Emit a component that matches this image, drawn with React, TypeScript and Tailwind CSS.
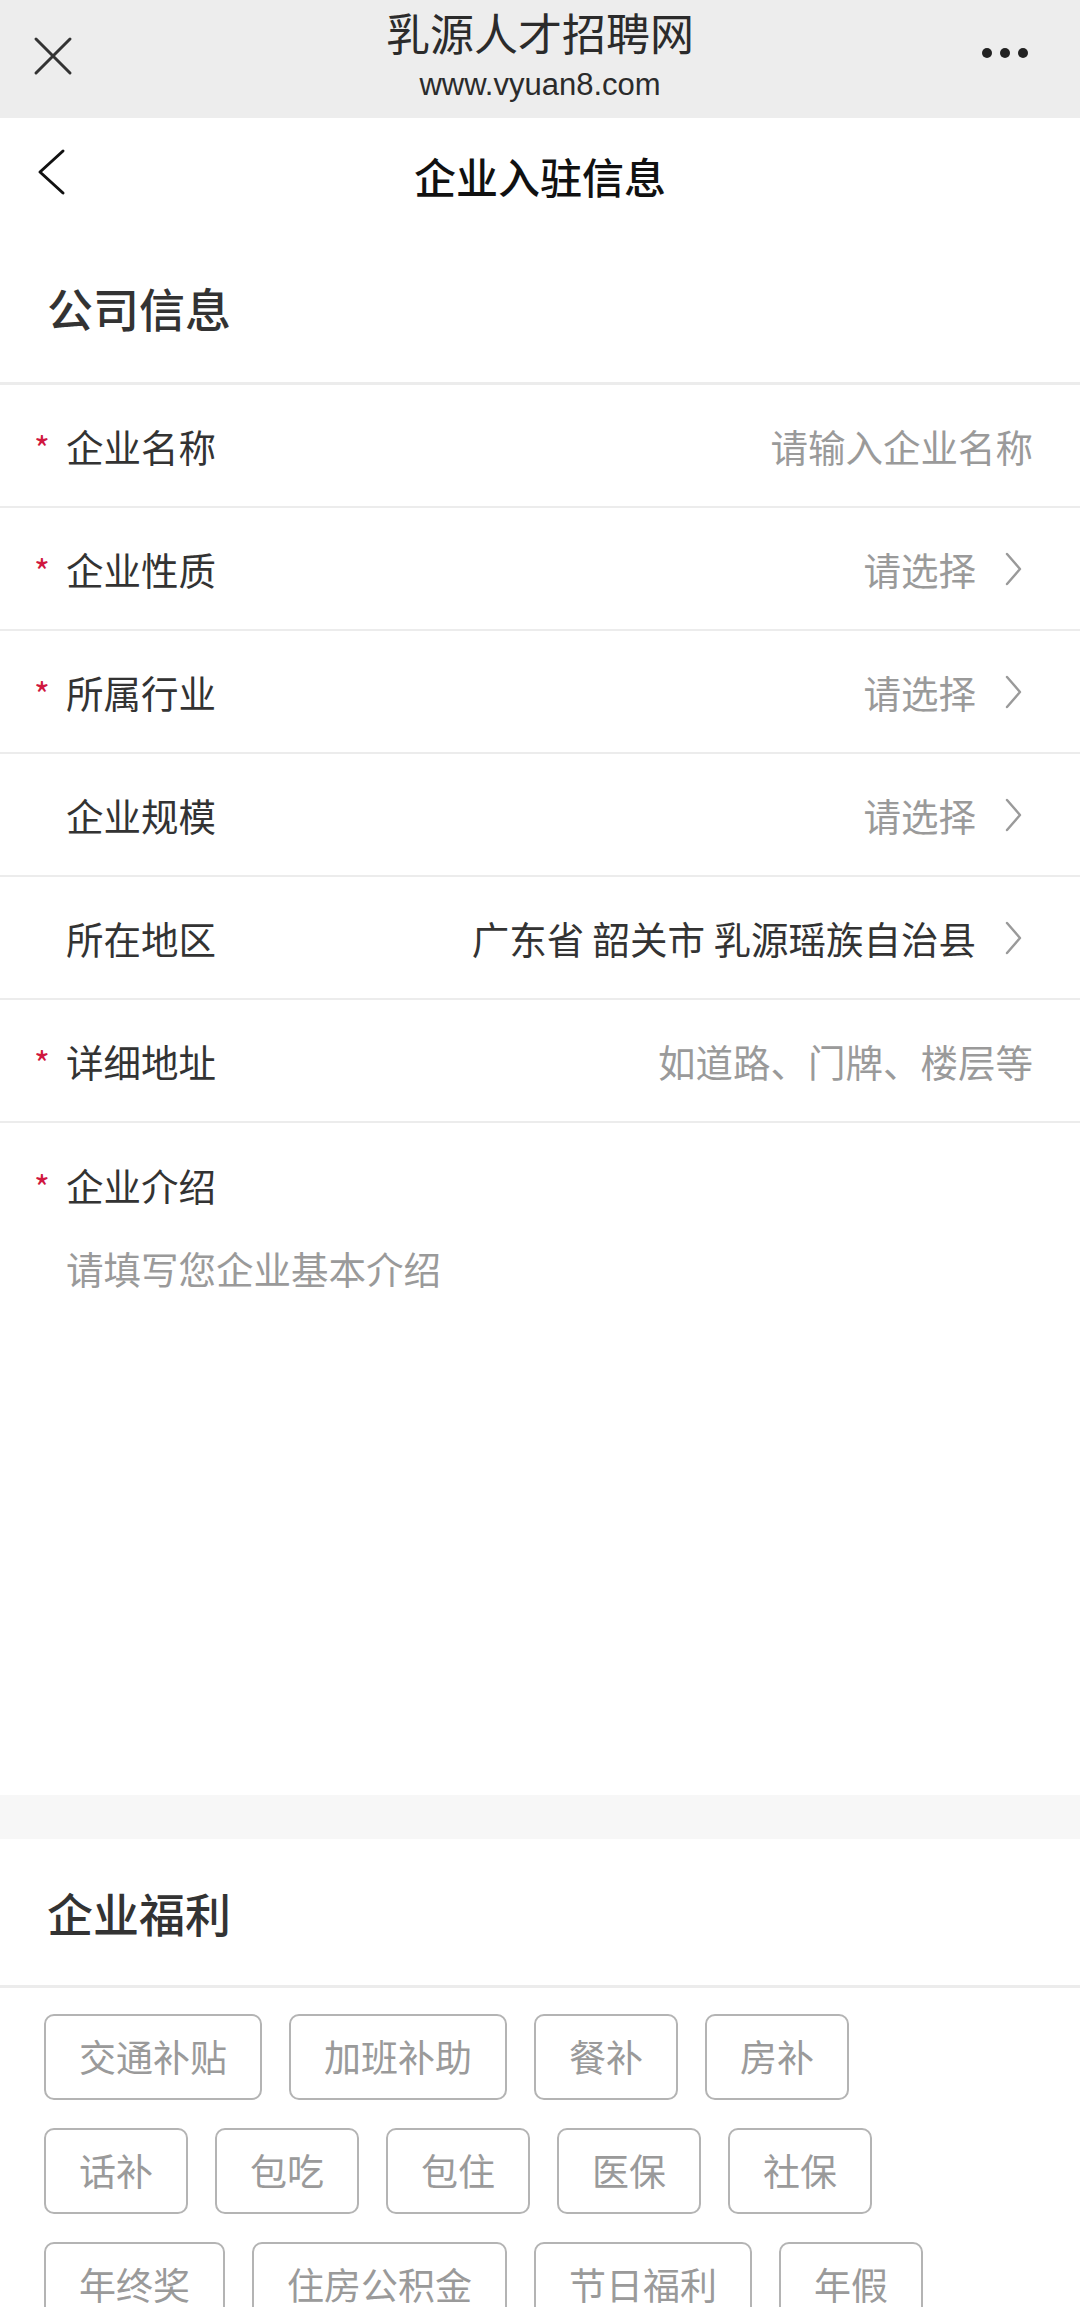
import React from "react";

const CJK = { fontFamily: '"Noto Sans CJK SC", "Noto Sans", sans-serif' };

function Chevron() {
  return (
    <svg width="20" height="36" viewBox="0 0 20 36" fill="none" className="ml-[28px] mr-[9px] shrink-0">
      <path d="M3 3 L16 18 L3 33" stroke="#9a9a9a" strokeWidth="2.4" strokeLinecap="round" strokeLinejoin="round" />
    </svg>
  );
}

type Row = { label: string; required: boolean; value: string; dark?: boolean; arrow: boolean };

const rows: Row[] = [
  { label: "企业名称", required: true, value: "请输入企业名称", arrow: false },
  { label: "企业性质", required: true, value: "请选择", arrow: true },
  { label: "所属行业", required: true, value: "请选择", arrow: true },
  { label: "企业规模", required: false, value: "请选择", arrow: true },
  { label: "所在地区", required: false, value: "广东省 韶关市 乳源瑶族自治县", dark: true, arrow: true },
  { label: "详细地址", required: true, value: "如道路、门牌、楼层等", arrow: false },
];

const tagRows = [
  ["交通补贴", "加班补助", "餐补", "房补"],
  ["话补", "包吃", "包住", "医保", "社保"],
  ["年终奖", "住房公积金", "节日福利", "年假"],
];

export default function App() {
  return (
    <div className="w-[1080px] h-[2307px] overflow-hidden bg-white" style={CJK}>
      {/* WeChat top bar */}
      <div className="h-[118px] bg-[#ededed] relative flex flex-col items-center pt-[6px]">
        <div className="text-[44px] leading-[52px] text-[#2b2b2b]">乳源人才招聘网</div>
        <div className="text-[31px] leading-[34px] text-[#2b2b2b] mt-[10px]" style={{ fontFamily: '"Liberation Sans", Arial, sans-serif' }}>
          www.vyuan8.com
        </div>
        <svg width="40" height="40" viewBox="0 0 40 40" className="absolute left-[33px] top-[36px]">
          <path d="M3 3 L37 37 M37 3 L3 37" stroke="#333" strokeWidth="3" strokeLinecap="round" />
        </svg>
        <div className="absolute right-[52px] top-[48px] flex items-center gap-[8px]">
          <span className="w-[10px] h-[10px] rounded-full bg-[#222] shrink-0" />
          <span className="w-[10px] h-[10px] rounded-full bg-[#222] shrink-0" />
          <span className="w-[10px] h-[10px] rounded-full bg-[#222] shrink-0" />
        </div>
      </div>

      {/* page nav */}
      <div className="h-[120px] flex items-center relative">
        <svg width="30" height="48" viewBox="0 0 30 48" className="absolute left-[36px] top-[30px]">
          <path d="M27 3 L4 24 L27 45" stroke="#111" strokeWidth="3" fill="none" strokeLinecap="round" strokeLinejoin="round" />
        </svg>
        <div className="flex-1 text-center text-[42px] font-medium text-[#111] pb-[6px]">企业入驻信息</div>
      </div>

      {/* 公司信息 header */}
      <div className="h-[144px] flex items-center pl-[47px] text-[46px] font-medium text-[#333] pb-[6px]">公司信息</div>

      <div className="border-t-[3px] border-[#ececec]">
        {rows.map((r) => (
          <div key={r.label} className="h-[123px] border-b-2 border-[#ececec] flex items-center pr-[47px]">
            <div className="w-[66px] shrink-0 pl-[34px] text-[34px] text-[#d0173f] h-[40px] leading-[44px]">{r.required ? "*" : ""}</div>
            <div className="text-[37.5px] text-[#333] leading-none">{r.label}</div>
            <div className="flex-1" />
            <div className={`text-[37.5px] leading-none ${r.dark ? "text-[#333]" : "text-[#9a9a9a]"}`}>{r.value}</div>
            {r.arrow ? <Chevron /> : null}
          </div>
        ))}
      </div>

      {/* 企业介绍 */}
      <div className="h-[672px] pt-[42px]">
        <div className="flex items-center">
          <div className="w-[66px] shrink-0 pl-[34px] text-[34px] text-[#d0173f] h-[40px] leading-[44px]">*</div>
          <div className="text-[37.5px] text-[#333] leading-none">企业介绍</div>
        </div>
        <div className="pl-[66px] mt-[44px] text-[37.5px] text-[#9a9a9a] leading-none">请填写您企业基本介绍</div>
      </div>

      <div className="h-[44px] bg-[#f7f7f7]" />

      {/* 企业福利 */}
      <div className="h-[146px] flex items-center pl-[47px] text-[46px] font-medium text-[#333]">企业福利</div>
      <div className="border-t-[3px] border-[#ececec] pt-[26px] pl-[44px] flex flex-col gap-[28px]">
        {tagRows.map((row, i) => (
          <div key={i} className="flex gap-[27px]">
            {row.map((t) => (
              <div
                key={t}
                className="h-[86px] px-[33px] border-2 border-[#b4b4b4] rounded-[10px] flex items-center justify-center text-[37px] text-[#9a9a9a]"
              >
                {t}
              </div>
            ))}
          </div>
        ))}
      </div>
    </div>
  );
}
